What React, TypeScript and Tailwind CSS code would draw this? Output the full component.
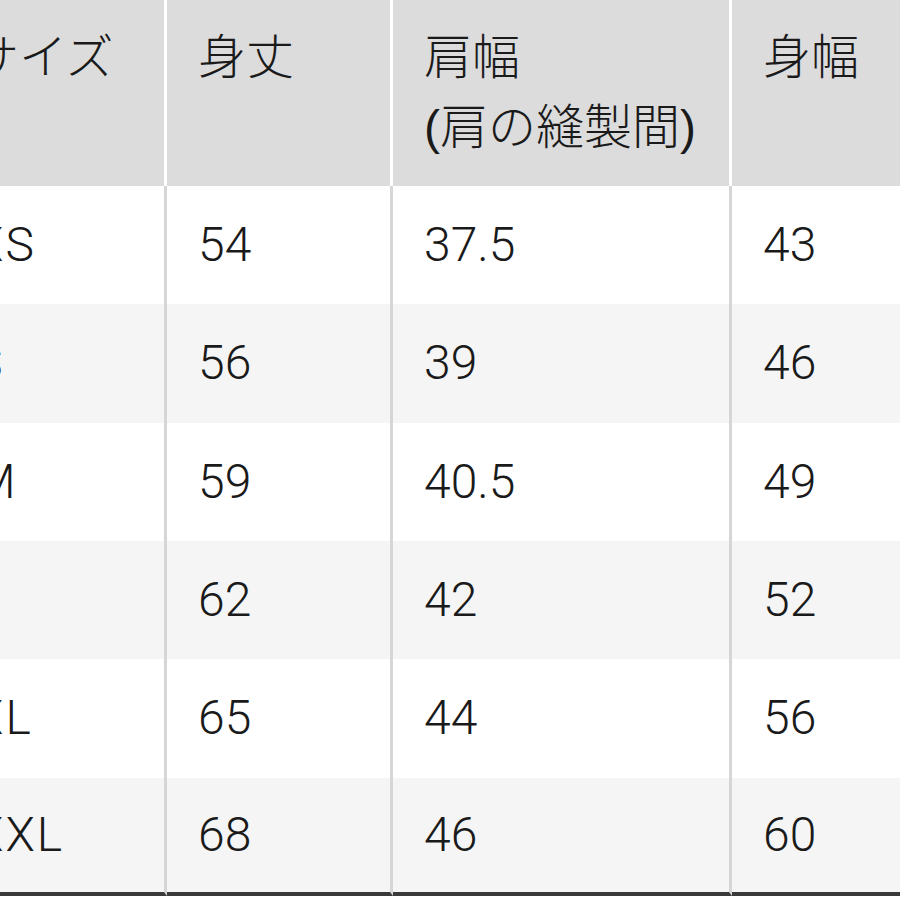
const headers = ["サイズ", "身丈", "肩幅\n(肩の縫製間)", "身幅"];

const rows = [
  ["XS", "54", "37.5", "43"],
  ["S", "56", "39", "46"],
  ["M", "59", "40.5", "49"],
  ["L", "62", "42", "52"],
  ["XL", "65", "44", "56"],
  ["XXL", "68", "46", "60"],
];

const widths = ["w-[227px]", "w-[226px]", "w-[339px]", "w-[260px]"];

export default function App() {
  return (
    <div className="w-[900px] h-[900px] overflow-hidden bg-white">
      <table
        className="w-[1052px] ml-[-60px] table-fixed border-separate border-spacing-0 text-[48px] leading-[70px] text-[#1a1a1a]"
        style={{ fontFamily: '"Liberation Sans", "Noto Sans CJK JP", sans-serif' }}
      >
        <colgroup>
          {widths.map((w, i) => (
            <col key={i} className={w} />
          ))}
        </colgroup>
        <thead>
          <tr>
            {headers.map((h, i) => (
              <th
                key={i}
                className="h-[186px] bg-[#dcdcdc] border-r-[3px] border-white pl-[31px] pt-[23px] align-top text-left font-light whitespace-pre-line"
              >
                {h}
              </th>
            ))}
          </tr>
        </thead>
        <tbody className="font-['Roboto',sans-serif] font-light">
          {rows.map((r, ri) => (
            <tr key={ri} className={ri % 2 === 1 ? "bg-[#f5f5f5]" : "bg-white"}>
              {r.map((c, ci) => (
                <td
                  key={ci}
                  className={
                    "h-[118.33px] border-r-[3px] border-[#d6d6d6] align-middle whitespace-nowrap" +
                    (ci === 0 ? " pl-[34px] tracking-[2px]" : " pl-[31px]") +
                    (ri === rows.length - 1 ? " border-b-4 border-b-[#3a3a3a]" : "")
                  }
                >
                  {c}
                </td>
              ))}
            </tr>
          ))}
        </tbody>
      </table>
    </div>
  );
}
